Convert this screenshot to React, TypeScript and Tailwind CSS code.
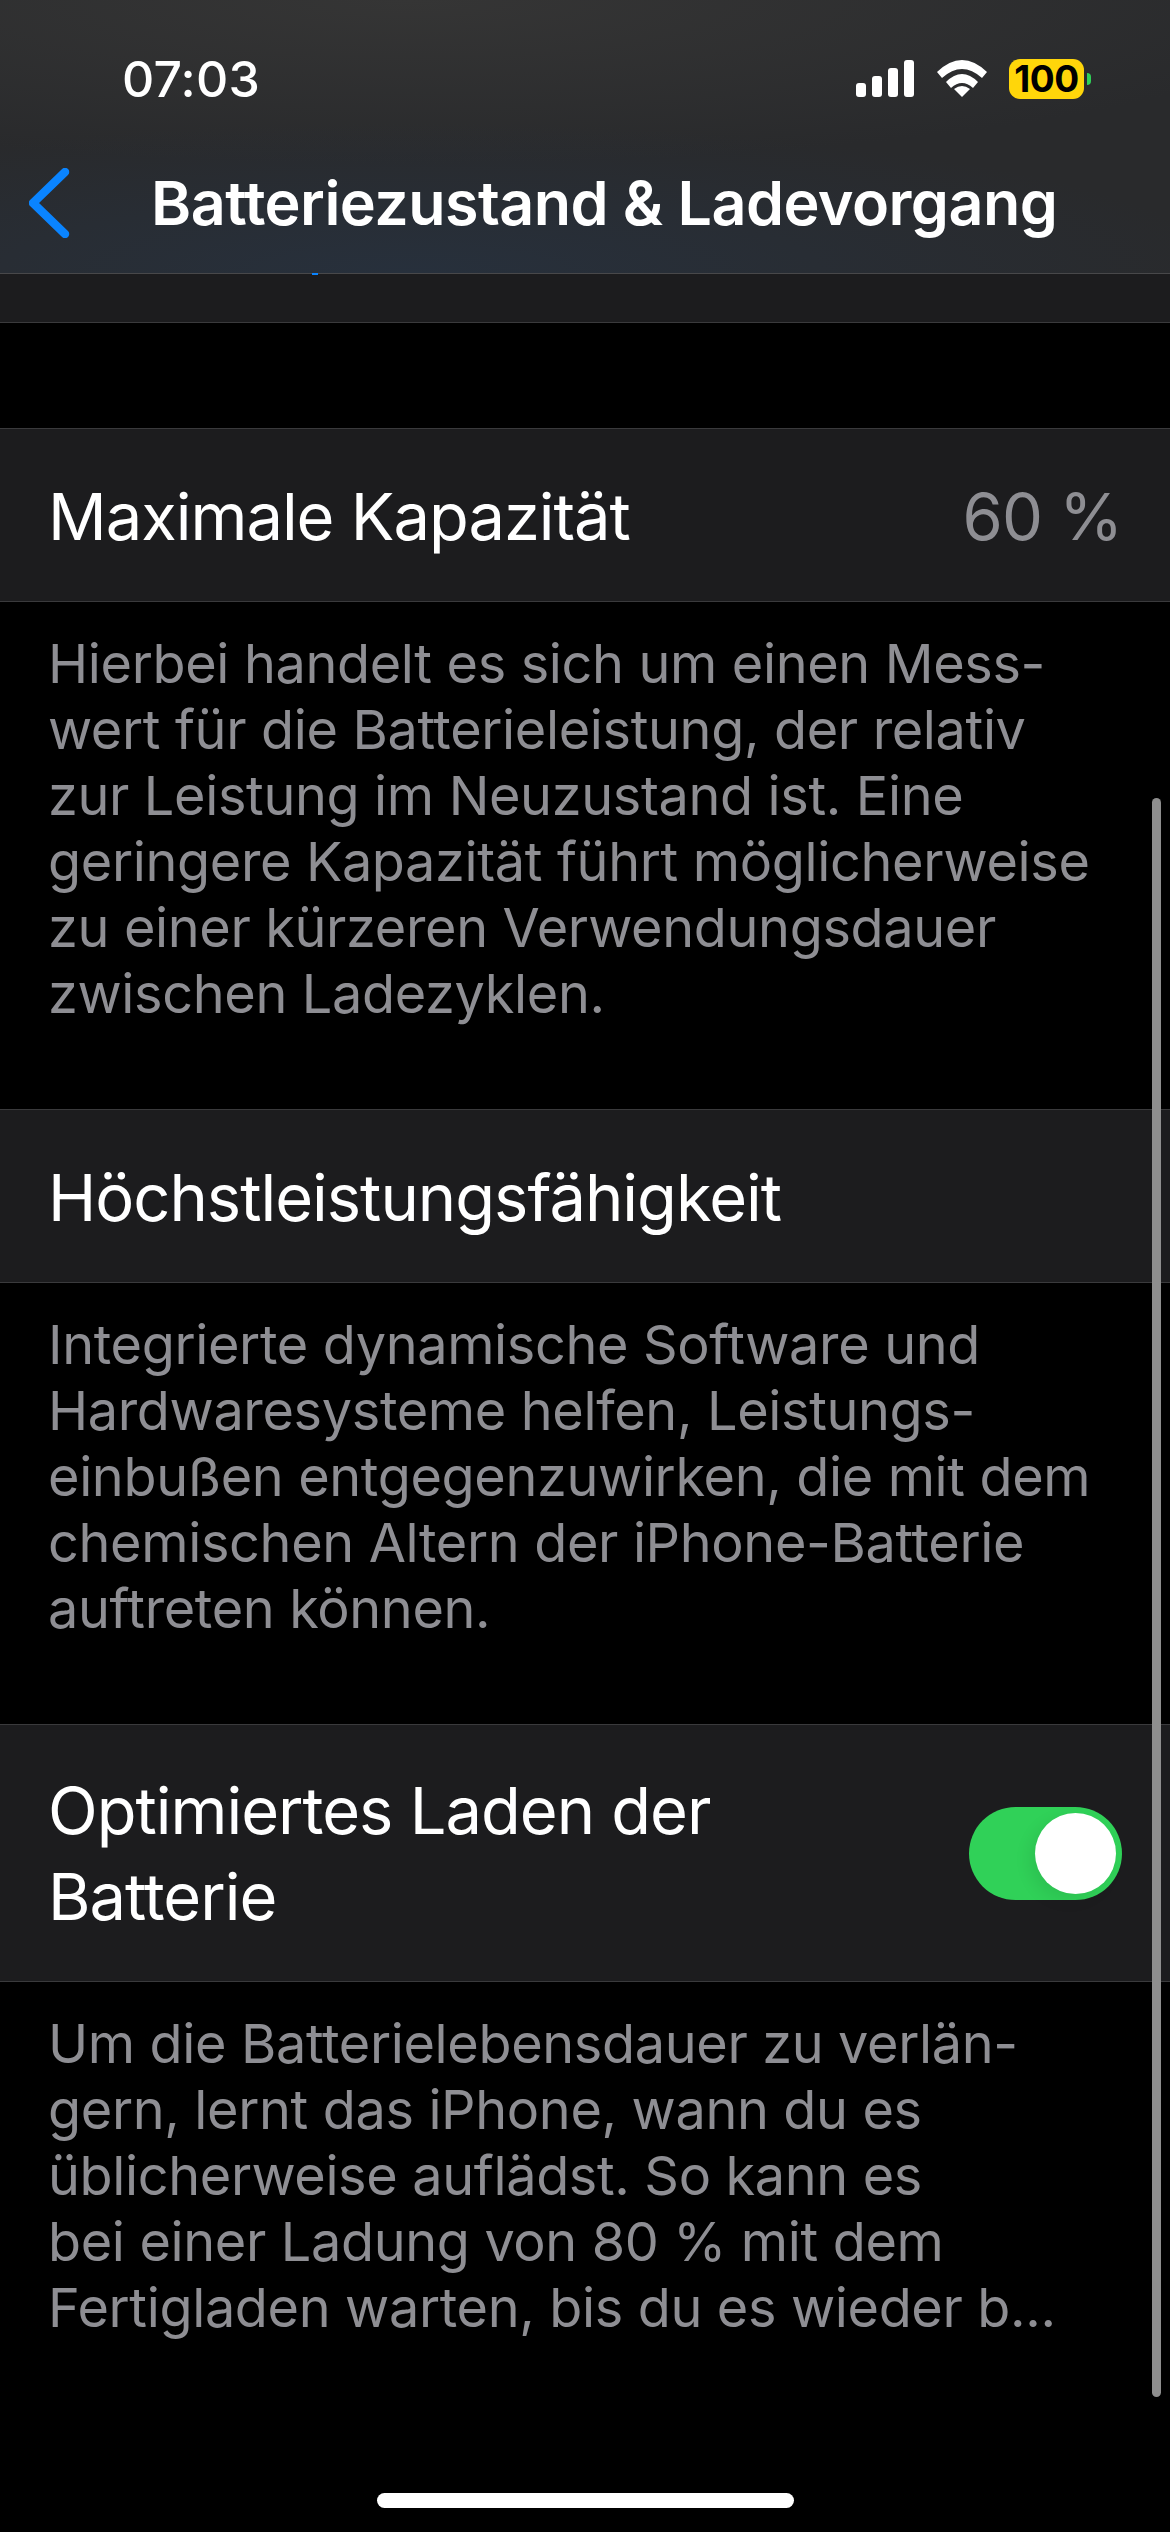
import React from 'react';

function StatusIcons() {
  return (
    <div className="flex items-center">
      <svg width="58" height="37" viewBox="0 0 58 37" className="mr-[23px]">
        <rect x="0" y="23" width="10" height="14" rx="3" fill="#fff" />
        <rect x="16" y="16" width="10" height="21" rx="3" fill="#fff" />
        <rect x="32" y="8" width="10" height="29" rx="3" fill="#fff" />
        <rect x="48" y="0" width="10" height="37" rx="3" fill="#fff" />
      </svg>
      <svg width="50" height="37" viewBox="0 0 50 37" className="mr-[22px]">
        <path d="M25 37 L17 29 Q25 23 33 29 Z" fill="#fff" />
        <path d="M9 22 Q25 6 41 22 L36 28 Q25 18 14 28 Z" fill="#fff" />
        <path d="M0 12 Q25 -12 50 12 L45 18 Q25 0 5 18 Z" fill="#fff" />
      </svg>
      <div className="w-[75px] h-[40px] rounded-[11px] bg-[#ffd60a] flex items-center justify-center text-[37px] font-bold text-black leading-none tracking-[-0.5px]">
        100
      </div>
      <div className="w-[4px] h-[12px] ml-[3px] rounded-r-full bg-[#30d158]" />
    </div>
  );
}

function Row({ children }: { children: React.ReactNode }) {
  return (
    <div className="h-[174px] pt-[4px] pl-[48px] pr-[48px] flex items-center justify-between bg-[#1c1c1e] border-y border-[#3a3a3c] text-[65px] tracking-[-1px] text-white">
      {children}
    </div>
  );
}

function Footer({ lines, className }: { lines: string[]; className: string }) {
  return (
    <div className={`pl-[48px] text-[54px] leading-[66px] tracking-[-0.35px] text-[#8e8e93] ${className}`}>
      {lines.map((l) => (
        <div key={l} className="whitespace-nowrap">{l}</div>
      ))}
    </div>
  );
}

export default function App() {
  return (
    <div className="relative w-[1170px] h-[2532px] overflow-hidden bg-black font-['Inter',sans-serif]">
      <div className="h-[274px] bg-[radial-gradient(ellipse_70%_55%_at_35%_100%,#27303c,transparent),radial-gradient(ellipse_80%_60%_at_35%_0%,#353535,transparent)] bg-[#292a2c] border-b border-[#48484a] relative">
        <div className="flex items-center justify-between pt-[57px] pl-[122px] pr-[79px] h-[100px]">
          <span className="text-[50px] font-medium text-white leading-none tracking-[0.2px]">07:03</span>
          <StatusIcons />
        </div>
        <div className="flex items-center h-[70px] mt-[68px] pl-[29px]">
          <svg width="42" height="70" viewBox="0 0 42 70">
            <path d="M36 4 L4 35 L36 66" fill="none" stroke="#0a84ff" strokeWidth="8.5" strokeLinecap="round" strokeLinejoin="round" />
          </svg>
          <span className="ml-[80px] text-[61px] font-semibold text-white leading-none tracking-[-0.55px] whitespace-nowrap">Batteriezustand &amp; Ladevorgang</span>
        </div>
        <div className="absolute left-[312px] bottom-[-2px] w-[6px] h-[2px] bg-[#0a84ff]" />
      </div>
      <div className="h-[49px] bg-[#1c1c1e] border-b border-[#3a3a3c]" />
      <div className="h-[105px]" />

      <Row>
        <span>Maximale Kapazität</span>
        <span className="text-[#8e8e93]">60 %</span>
      </Row>
      <Footer
        className="pt-[29px] h-[507px]"
        lines={[
          'Hierbei handelt es sich um einen Mess-',
          'wert für die Batterieleistung, der relativ',
          'zur Leistung im Neuzustand ist. Eine',
          'geringere Kapazität führt möglicherweise',
          'zu einer kürzeren Verwendungsdauer',
          'zwischen Ladezyklen.',
        ]}
      />

      <Row>
        <span>Höchstleistungsfähigkeit</span>
      </Row>
      <Footer
        className="pt-[29px] h-[441px]"
        lines={[
          'Integrierte dynamische Software und',
          'Hardwaresysteme helfen, Leistungs-',
          'einbußen entgegenzuwirken, die mit dem',
          'chemischen Altern der iPhone-Batterie',
          'auftreten können.',
        ]}
      />

      <div className="h-[258px] pt-[2px] pl-[48px] pr-[48px] flex items-center justify-between bg-[#1c1c1e] border-y border-[#3a3a3c] text-[65px] leading-[86px] tracking-[-1px] text-white">
        <div>
          <div>Optimiertes Laden der</div>
          <div>Batterie</div>
        </div>
        <div className="w-[153px] h-[93px] -mt-[2px] rounded-full bg-[#30d158] flex items-center justify-end pr-[6px]">
          <div className="w-[81px] h-[81px] rounded-full bg-white shadow-[-6px_6px_16px_rgba(0,0,0,0.08)]" />
        </div>
      </div>
      <Footer
        className="pt-[29px]"
        lines={[
          'Um die Batterielebensdauer zu verlän-',
          'gern, lernt das iPhone, wann du es',
          'üblicherweise auflädst. So kann es',
          'bei einer Ladung von 80 % mit dem',
          'Fertigladen warten, bis du es wieder b...',
        ]}
      />

      {/* scroll indicator + home bar sit on top of the list */}
      <div className="absolute left-[1152px] top-[798px] w-[9px] h-[1599px] rounded-full bg-[#8e8e8e]" />
      <div className="absolute left-[377px] top-[2493px] w-[417px] h-[15px] rounded-full bg-white" />
    </div>
  );
}
